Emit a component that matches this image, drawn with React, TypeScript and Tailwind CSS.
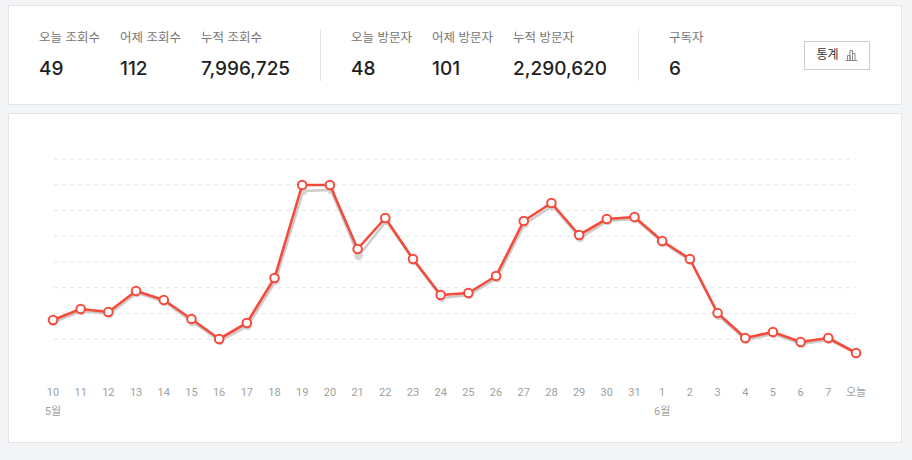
import React from "react";

const days = [
  "10", "11", "12", "13", "14", "15", "16", "17", "18", "19", "20", "21", "22", "23", "24",
  "25", "26", "27", "28", "29", "30", "31", "1", "2", "3", "4", "5", "6", "7", "오늘",
];

// y positions in page pixels, read off the reference
const views = [
  319, 308, 311, 290, 299, 318, 338, 322, 277, 184, 184, 248, 217, 258, 294,
  292, 275, 220, 202, 234, 218, 216, 240, 258, 312, 337, 331, 341, 337, 352,
];
const shadowOffset = [
  2, 2, 2, 2, 2, 3, 2, 3, 3, 6, 5, 7, 3, 2, 3,
  2, 2, 3, 3, 3, 2, 2, 2, 2, 3, 2, 2, 2, 2, 0,
];

const CARD_X = 8;
const CARD_Y = 113;
const px = (i: number) => 52 + i * 27.69 - CARD_X;
const py = (y: number) => y - CARD_Y;

function Stat({ label, value, className = "" }: { label: string; value: string; className?: string }) {
  return (
    <div className={"flex flex-col " + className}>
      <span className="text-[12.5px] leading-[18px] text-[#767676]">{label}</span>
      <span className="mt-[9px] text-[19px] leading-[26px] font-medium text-[#1e1e1e]">{value}</span>
    </div>
  );
}

function Chart() {
  const redPts = views.map((y, i) => `${px(i)},${py(y)}`).join(" ");
  const grayPts = views.map((y, i) => `${px(i) + 1},${py(y + shadowOffset[i])}`).join(" ");
  const font = "Roboto, 'Noto Sans CJK KR', sans-serif";
  return (
    <svg width="894" height="330" viewBox="0 0 894 330" className="block">
      {Array.from({ length: 8 }).map((_, k) => {
        const y = py(158 + k * 25.75);
        return (
          <line key={k} x1={45} x2={846} y1={y} y2={y} stroke="#e4e4e4" strokeWidth={1} strokeDasharray="4 4" />
        );
      })}
      <polyline points={grayPts} fill="none" stroke="#cccccc" strokeWidth={2.5} strokeLinejoin="round" />
      {views.map((y, i) => (
        <circle key={"g" + i} cx={px(i) + 1} cy={py(y + shadowOffset[i])} r={4.2} fill="#d6d6d6" />
      ))}
      <polyline points={redPts} fill="none" stroke="#f54b3c" strokeWidth={2.6} strokeLinejoin="round" />
      {views.map((y, i) => (
        <circle key={"r" + i} cx={px(i)} cy={py(y)} r={4.3} fill="#ffffff" stroke="#f54b3c" strokeWidth={2} />
      ))}
      {days.map((d, i) => (
        <text key={"t" + i} x={px(i)} y={py(395)} textAnchor="middle" fontSize={11} fill="#a0a0a0" fontFamily={font}>
          {d}
        </text>
      ))}
      <text x={px(0)} y={py(414)} textAnchor="middle" fontSize={11} fill="#a0a0a0" fontFamily={font}>
        5월
      </text>
      <text x={px(22)} y={py(414)} textAnchor="middle" fontSize={11} fill="#a0a0a0" fontFamily={font}>
        6월
      </text>
    </svg>
  );
}

export default function App() {
  return (
    <main
      className="w-[912px] h-[460px] bg-[#f3f4f6] pl-2 pr-[10px] pt-[5px] overflow-hidden"
      style={{ fontFamily: "Inter, 'Noto Sans CJK KR', sans-serif" }}
    >
      {/* Summary */}
      <section className="h-[100px] bg-white border border-[#e3e5e9] flex items-center pl-[30px] pr-[31px]">
        <Stat label="오늘 조회수" value="49" className="w-[81px]" />
        <Stat label="어제 조회수" value="112" className="w-[81px]" />
        <Stat label="누적 조회수" value="7,996,725" className="w-[88px]" />
        <div className="w-px h-[52px] bg-[#e3e3e3] ml-[31px] mr-[30px]" />
        <Stat label="오늘 방문자" value="48" className="w-[81px]" />
        <Stat label="어제 방문자" value="101" className="w-[81px]" />
        <Stat label="누적 방문자" value="2,290,620" className="w-[94px]" />
        <div className="w-px h-[52px] bg-[#e3e3e3] ml-[31px] mr-[30px]" />
        <Stat label="구독자" value="6" />
        <button className="ml-auto h-[29px] w-[66px] border border-[#c9cdd3] bg-white flex items-center justify-center gap-[6px] text-[12px] text-[#333]">
          통계
          <svg width="13" height="12" viewBox="0 0 13 12" fill="none" stroke="#8a8a8a" strokeWidth="1">
            <path d="M0.5 11.5h12" />
            <path d="M2.5 11.5v-5h2.5v5" />
            <path d="M5 11.5v-10h2.5v10" />
            <path d="M7.5 11.5v-7h2.5v7" />
          </svg>
        </button>
      </section>

      {/* Chart */}
      <section className="mt-2 h-[330px] bg-white border border-[#e3e5e9] overflow-hidden">
        <Chart />
      </section>
    </main>
  );
}
